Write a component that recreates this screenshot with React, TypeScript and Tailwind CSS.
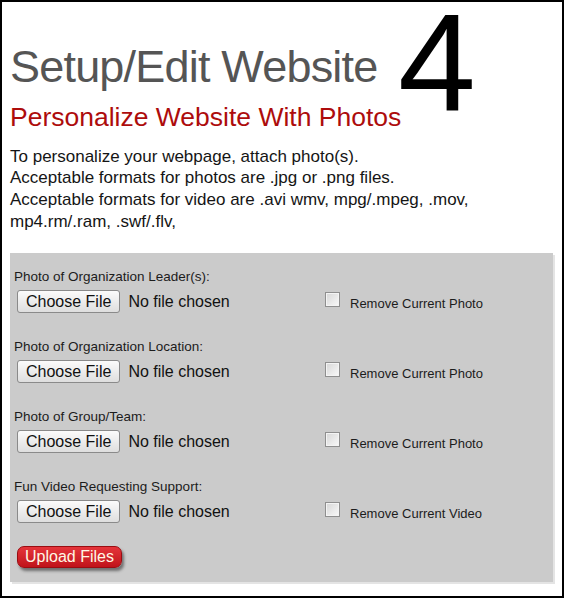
const rows = [
  { label: "Photo of Organization Leader(s):", remove: "Remove Current Photo" },
  { label: "Photo of Organization Location:", remove: "Remove Current Photo" },
  { label: "Photo of Group/Team:", remove: "Remove Current Photo" },
  { label: "Fun Video Requesting Support:", remove: "Remove Current Video" },
];

function UploadRow({ label, remove }: { label: string; remove: string }) {
  return (
    <div className="flex flex-col">
      <div className="mt-[1px] text-[13.5px] leading-4 text-[#1c1c1c]">{label}</div>
      <div className="mt-[5px] ml-[3px] flex h-[23px] items-center">
        <div className="flex w-[308px] items-center">
          <span className="flex h-[23px] items-center rounded-[3px] border border-[#8a8a8a] bg-gradient-to-b from-[#fbfbfb] to-[#dedede] px-[8px] text-[16px] leading-none text-[#111]">
            Choose File
          </span>
          <span className="ml-[8px] text-[16px] leading-none text-[#111]">No file chosen</span>
        </div>
        <span className="mb-[4px] h-[15px] w-[15px] border border-[#8f8f8f] bg-gradient-to-br from-[#d6d6d6] to-[#fafafa] shadow-[inset_0_0_0_1px_#f4f4f4]" />
        <span className="ml-[10px] mt-[5px] text-[13px] leading-4 text-[#1c1c1c]">{remove}</span>
      </div>
    </div>
  );
}

export default function App() {
  return (
    <div className="relative h-[598px] w-[564px] overflow-hidden border-2 border-black bg-white pl-[8px] pr-[9px] pt-[42px] font-['Liberation_Sans',Arial,sans-serif]">
      <h1 className="text-[45px] leading-none tracking-[-0.8px] text-[#555]">Setup/Edit Website</h1>
      <span className="absolute left-[396px] top-[11px] h-[100px] text-[140px] leading-[100px] text-black">4</span>
      <h2 className="mt-[15px] text-[26.5px] leading-none text-[#ad0c0c]">Personalize Website With Photos</h2>
      <p className="mt-[15px] text-[17px] leading-[21.7px] text-[#151515]">
        To personalize your webpage, attach photo(s).
        <br />
        Acceptable formats for photos are .jpg or .png files.
        <br />
        Acceptable formats for video are .avi wmv, mpg/.mpeg, .mov,
        <br />
        mp4.rm/.ram, .swf/.flv,
      </p>
      <div className="mt-[21px] flex h-[329px] flex-col bg-[#cbcbcb] pl-[4px] pt-[15px] shadow-[2px_2px_0_#e4e4e4]">
        <div className="flex flex-col gap-[25px]">
          {rows.map((r) => (
            <UploadRow key={r.label} label={r.label} remove={r.remove} />
          ))}
        </div>
        <div className="mt-[22px] ml-[3px]">
          <span className="inline-flex h-[22px] items-center rounded-[7px] border border-[#9a0d12] bg-gradient-to-b from-[#e5343a] to-[#c0121a] px-[7px] text-[16px] leading-none text-[#fff8e6] shadow-[2px_3px_3px_rgba(0,0,0,0.45)]">
            Upload Files
          </span>
        </div>
      </div>
    </div>
  );
}
